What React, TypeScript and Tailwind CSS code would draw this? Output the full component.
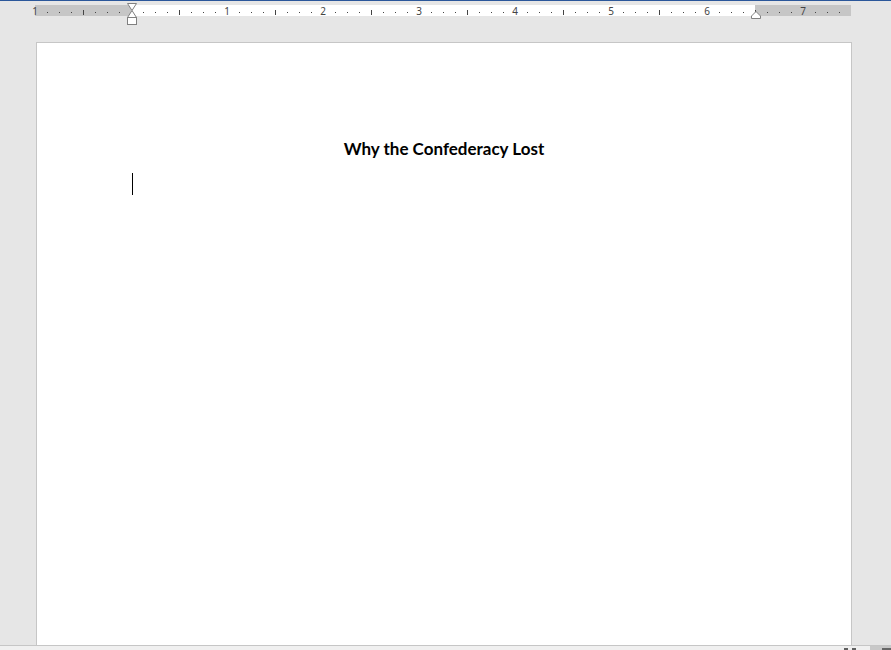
import React from 'react';

// ruler: 96px per inch, origin at the left margin (96px into the ruler)
const ORIGIN = 96;

function RulerMarks() {
  const marks: React.ReactNode[] = [];
  for (let k = -8; k < 60; k++) {
    const x = ORIGIN + k * 12;
    if (k === 0) continue;
    if (k % 8 === 0) {
      marks.push(
        <text
          key={k}
          x={x}
          y={10}
          textAnchor="middle"
          fontSize="10"
          fontFamily="'Noto Sans', sans-serif"
          fill="#444"
        >
          {Math.abs(k / 8)}
        </text>
      );
    } else if (k % 4 === 0) {
      marks.push(<rect key={k} x={x} y={5} width={1} height={5} fill="#444" />);
    } else {
      marks.push(<rect key={k} x={x} y={7} width={1} height={1} fill="#444" />);
    }
  }
  return (
    <svg className="absolute left-0 top-0 overflow-visible" width={816} height={11}>
      {marks}
    </svg>
  );
}

function Ruler() {
  return (
    <div className="pt-[4px]">
      <div className="relative ml-[35px] flex h-[11px] w-[816px]">
        <div className="w-[96px] bg-[#c6c6c6]" />
        <div className="w-[624px] bg-white" />
        <div className="w-[96px] bg-[#c6c6c6]" />
        <RulerMarks />
        {/* left indent markers */}
        <svg className="absolute left-[92px] top-[-2px]" width={10} height={22}>
          <path d="M0.5 0.5 H9.5 L5 7.5 Z" fill="#fff" stroke="#808080" />
          <path d="M5 7.5 L9.5 14.5 H0.5 Z" fill="#fff" stroke="#808080" />
          <rect x={0.5} y={14.5} width={9} height={7} fill="#fff" stroke="#808080" />
        </svg>
        {/* right indent marker */}
        <svg className="absolute left-[716px] top-[6px]" width={10} height={8}>
          <path d="M5 0.5 L9.5 5 V7.5 H0.5 V5 Z" fill="#fff" stroke="#808080" />
        </svg>
      </div>
    </div>
  );
}

export default function App() {
  return (
    <div className="flex h-[650px] w-[891px] flex-col overflow-hidden bg-[#e6e6e6]">
      <div className="h-px bg-[#2b579a]" />
      <Ruler />

      <div className="flex min-h-0 flex-1 pl-[36px] pt-[26px]">
        <div className="w-[816px] border border-b-0 border-[#c6c6c6] bg-white">
          <h1
            className="pt-[96px] text-center text-[17px] font-bold leading-[20px] text-black"
            style={{ fontFamily: 'Lato, "Liberation Sans", sans-serif' }}
          >
            Why the Confederacy Lost
          </h1>
          <div className="ml-[95px] mt-[14px] h-[22px] w-px bg-black" />
        </div>
      </div>

      <div className="relative h-[5px] shrink-0 border-t border-[#c6c6c6] bg-[#f0f0f0]">
        <div className="absolute left-[844px] top-[2px] h-[4px] w-[4px] bg-[#606060]" />
        <div className="absolute left-[852px] top-[2px] h-[4px] w-[4px] bg-[#606060]" />
        <div className="absolute left-[870px] top-0 h-[5px] w-[21px] bg-[#c8c8c8]" />
        <div className="absolute left-[882px] top-[2px] h-[3px] w-[9px] bg-[#666]" />
      </div>
    </div>
  );
}
